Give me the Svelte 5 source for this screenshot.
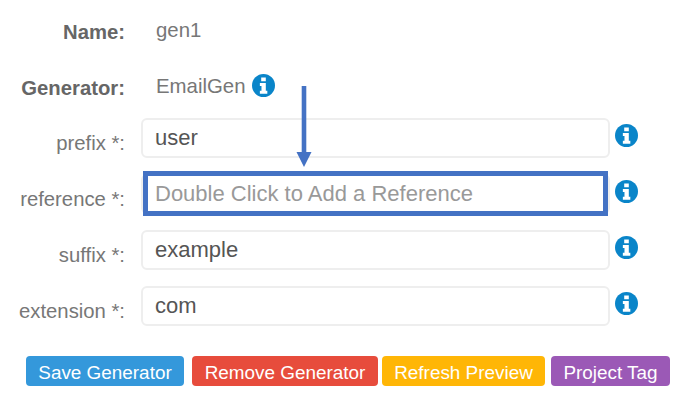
<script>
  const rows = [
    { label: 'prefix *:', value: 'user' },
    { label: 'reference *:', value: '', placeholder: 'Double Click to Add a Reference' },
    { label: 'suffix *:', value: 'example' },
    { label: 'extension *:', value: 'com' }
  ];
  const buttons = [
    { text: 'Save Generator', cls: 'blue' },
    { text: 'Remove Generator', cls: 'red' },
    { text: 'Refresh Preview', cls: 'amber' },
    { text: 'Project Tag', cls: 'purple' }
  ];
</script>

{#snippet info()}
  <svg class="info" viewBox="0 0 24 24" aria-hidden="true">
    <circle cx="12" cy="12" r="12" fill="#0a85c9" />
    <path d="M9.600 3.600h4.800v3.900H9.600zM8.200 9.400h6.200v8h1.600v3.200H8.200v-3.200h1.700v-4.800H8.200z" fill="#fff" />
  </svg>
{/snippet}

<main class="form">
  <div class="static first">
    <b class="label">Name:</b>
    <span class="value">gen1</span>
  </div>
  <div class="static second">
    <b class="label">Generator:</b>
    <span class="value">EmailGen</span>
    {@render info()}
  </div>

  <div class="fields">
    {#each rows as row}
      <div class="field">
        <span class="label">{row.label}</span>
        <input value={row.value} placeholder={row.placeholder ?? ''} />
        {@render info()}
      </div>
    {/each}
    <div class="highlight"></div>
    <svg class="arrow" viewBox="0 0 16 81" aria-hidden="true">
      <path d="M5.700 0h4.600v66H15.500L8 81 .500 66h5.200z" fill="#4472c4" />
    </svg>
  </div>

  <div class="buttons">
    {#each buttons as b}
      <button class={b.cls}>{b.text}</button>
    {/each}
  </div>
</main>

<style>
  :global(body) {
    margin: 0;
    background: #fff;
  }
  .form {
    width: 693px;
    height: 415px;
    box-sizing: border-box;
    padding-top: 10px;
    font-family: "Liberation Sans", Arial, sans-serif;
    font-size: 20px;
    color: #777;
    overflow: hidden;
  }
  .static {
    display: grid;
    grid-template-columns: 125px auto auto 1fr;
    column-gap: 31px;
    height: 40px;
    align-items: center;
  }
  .second {
    margin-top: 16px;
    margin-bottom: 12px;
  }
  .static .value {
    font-size: 20.400px;
  }
  .static .info {
    margin-left: -25px;
    top: -1px;
  }
  .static .label {
    color: #666;
    font-size: 20.300px;
    position: relative;
    top: 2px;
  }
  .label {
    display: block;
    text-align: right;
    white-space: nowrap;
  }
  .fields {
    position: relative;
    display: flex;
    flex-direction: column;
    gap: 16px;
  }
  .field {
    display: grid;
    grid-template-columns: 125px 469px 23px;
    column-gap: 16px;
    height: 40px;
    align-items: center;
  }
  .field .label {
    font-size: 20.300px;
    position: relative;
    top: 5px;
  }
  input {
    box-sizing: border-box;
    width: 469px;
    height: 40px;
    border: 2px solid #eee;
    border-radius: 6px;
    padding: 0 12px;
    margin: 0;
    font: 22px "Liberation Sans", Arial, sans-serif;
    color: #555;
    background: #fff;
    outline: none;
  }
  input::placeholder {
    color: #999;
    opacity: 1;
  }
  .info {
    width: 23px;
    height: 23px;
    margin-left: -11px;
    position: relative;
    top: -3px;
  }
  .highlight {
    position: absolute;
    left: 143px;
    top: 53px;
    width: 465px;
    height: 45px;
    box-sizing: border-box;
    border: 5px solid #4472c4;
  }
  .arrow {
    position: absolute;
    left: 296px;
    top: -32px;
    width: 16px;
    height: 81px;
  }
  .buttons {
    display: flex;
    margin: 30px 0 0 26px;
  }
  button {
    height: 30px;
    margin: 0;
    padding: 3px 0 0;
    border: 0;
    border-radius: 4px;
    color: #fff;
    font: 18.900px "Liberation Sans", Arial, sans-serif;
    white-space: nowrap;
  }
  .blue { width: 158px; background: #3498db; margin-right: 8px; }
  .red { width: 186px; background: #e74c3c; margin-right: 4px; }
  .amber { width: 163px; background: #ffb606; margin-right: 6px; }
  .purple { width: 119px; background: #9b59b6; }
</style>
